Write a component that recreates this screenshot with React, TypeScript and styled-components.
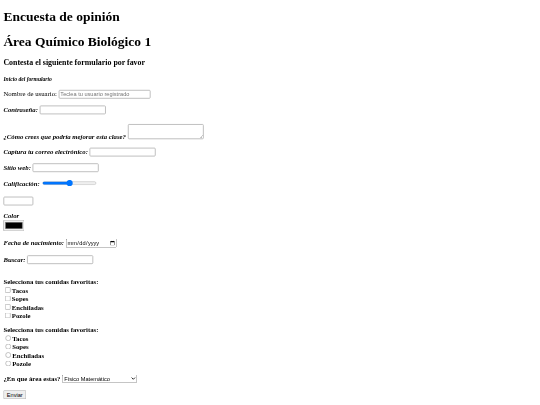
import styled, { createGlobalStyle } from "styled-components";
import { Fragment } from "react";

const GlobalStyle = createGlobalStyle`
  html, body {
    margin: 0;
    background: #fff;
  }
`;

const Frame = styled.div`
  width: 540px;
  height: 405px;
  overflow: hidden;
`;

// the reference is a 1280x960 page shown at 540x405, so lay it out at full size and shrink it
const Screen = styled.div`
  display: flow-root;
  width: 1280px;
  transform: scale(0.421875);
  transform-origin: 0 0;
`;

const Page = styled.main`
  margin: 8px;
  font-family: "Liberation Serif", "Times New Roman", serif;
  font-size: 16px;
  color: #000;
`;

const Title = styled.h1`
  font-size: 2em;
  font-weight: bold;
  margin: 0.67em 0;
`;

const Subtitle = styled.h3`
  font-size: 1.17em;
  font-weight: bold;
  margin: 1em 0;
`;

const SectionLabel = styled.p`
  margin: 1em 0;

  small {
    font-size: 13.28px;
    font-weight: bold;
    font-style: italic;
  }
`;

const Row = styled.p<{ $extra?: number }>`
  margin: ${(p) => 16 + (p.$extra ?? 0)}px 0 16px;
`;

const Label = styled.label<{ $strong?: boolean }>`
  font-weight: ${(p) => (p.$strong ? "bold" : "normal")};
  font-style: ${(p) => (p.$strong ? "italic" : "normal")};
`;

const controlFont = `
  font-family: "Liberation Sans", Arial, sans-serif;
  font-size: 13.333px;
`;

// 2px borders so the frame survives the shrink as a thin grey line
const fieldFrame = `
  border: 2px solid #b4b4b4;
  border-radius: 3px;
  background: #fff;
`;

const TextField = styled.input<{ $width?: number }>`
  ${controlFont}
  ${fieldFrame}
  box-sizing: border-box;
  width: ${(p) => p.$width ?? 157}px;
  padding: 1px 2px;

  &::placeholder {
    color: #757575;
  }
`;

const Comment = styled.textarea`
  ${controlFont}
  ${fieldFrame}
  box-sizing: border-box;
  width: 180px;
  height: 36px;
`;

const Rating = styled.input`
  width: 129px;
`;

const ColorField = styled.input`
  width: 50px;
  height: 27px;
`;

const DateField = styled.input`
  ${controlFont}
  box-sizing: border-box;
  width: 121px;
`;

const ChoiceGroup = styled.p`
  margin: 1em 0;
  font-weight: bold;
`;

const Choice = styled.input``;

const AreaSelect = styled.select`
  ${controlFont}
  box-sizing: border-box;
  width: 178px;
`;

const SubmitButton = styled.button`
  ${controlFont}
`;

const foods = ["Tacos", "Sopes", "Enchiladas", "Pozole"];
const areas = [
  "Físico Matemático",
  "Químico Biológico",
  "Económico Administrativo",
  "Humanidades y Artes",
];

export default function App() {
  return (
    <>
      <GlobalStyle />
      <Frame>
        <Screen>
          <Page>
            <Title>Encuesta de opinión</Title>
            <Title>Área Químico Biológico 1</Title>
            <Subtitle>Contesta el siguiente formulario por favor</Subtitle>
            <form onSubmit={(e) => e.preventDefault()}>
              <SectionLabel>
                <small>Inicio del formulario</small>
              </SectionLabel>
              <Row>
                <Label>Nombre de usuario:</Label>{" "}
                <TextField $width={218} placeholder="Teclea tu usuario registrado" />
              </Row>
              <Row>
                <Label $strong>Contraseña:</Label> <TextField type="password" />
              </Row>
              <Row $extra={7}>
                <Label $strong>¿Cómo crees que podría mejorar esta clase?</Label>{" "}
                <Comment />
              </Row>
              <Row>
                <Label $strong>Captura tu correo electrónico:</Label>{" "}
                <TextField type="email" />
              </Row>
              <Row>
                <Label $strong>Sitio web:</Label> <TextField type="url" />
              </Row>
              <Row>
                <Label $strong>Calificación:</Label> <Rating type="range" />
              </Row>
              <Row $extra={4}>
                <TextField type="number" $width={71} />
              </Row>
              <Row>
                <Label $strong>Color</Label>
                <br />
                <ColorField type="color" defaultValue="#000000" />
              </Row>
              <Row $extra={2}>
                <Label $strong>Fecha de nacimiento:</Label> <DateField type="date" />
              </Row>
              <Row $extra={2}>
                <Label $strong>Buscar:</Label> <TextField type="search" />
              </Row>
              <ChoiceGroup>
                <br />
                Selecciona tus comidas favoritas:
                <br />
                {foods.map((food) => (
                  <Fragment key={food}>
                    <Choice type="checkbox" name="comidas" />
                    {food}
                    <br />
                  </Fragment>
                ))}
              </ChoiceGroup>
              <ChoiceGroup>
                Selecciona tus comidas favoritas:
                <br />
                {foods.map((food) => (
                  <Fragment key={food}>
                    <Choice type="radio" name="comida" />
                    {food}
                    <br />
                  </Fragment>
                ))}
              </ChoiceGroup>
              <ChoiceGroup>
                ¿En que área estas?{" "}
                <AreaSelect defaultValue={areas[0]}>
                  {areas.map((area) => (
                    <option key={area}>{area}</option>
                  ))}
                </AreaSelect>
              </ChoiceGroup>
              <Row $extra={2}>
                <SubmitButton type="submit">Enviar</SubmitButton>
              </Row>
            </form>
          </Page>
        </Screen>
      </Frame>
    </>
  );
}
